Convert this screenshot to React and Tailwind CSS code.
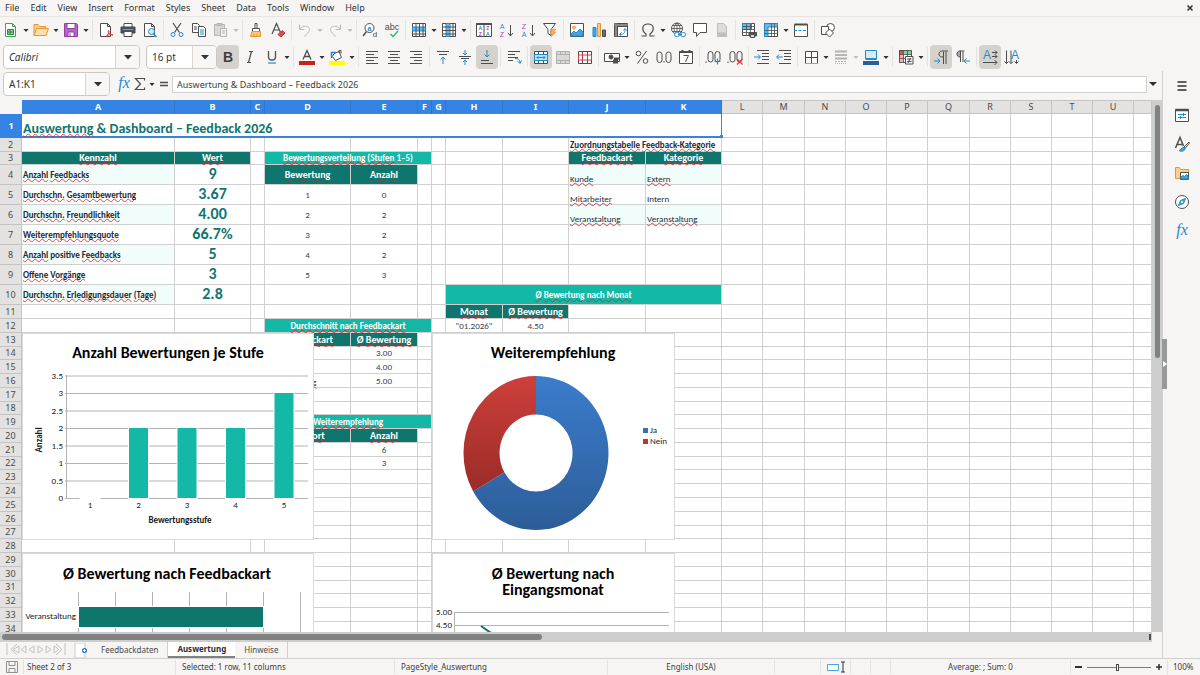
import { useState } from "react";

const SHEET_FONT = "font-[Carlito,Lato,sans-serif]";

/* ---------- icons, all drawn on a 16 x 16 grid ---------- */

function Icon({ children }) {
  return (
    <svg viewBox="0 0 16 16" className="size-4 shrink-0 overflow-visible" fill="none" stroke="#4d4d4d" strokeWidth="1" aria-hidden="true">
      {children}
    </svg>
  );
}

function Glyph({ x = 8, y = 12, size = 12, fill = "#4d4d4d", weight = 400, children }) {
  return (
    <text x={x} y={y} fontSize={size} fill={fill} stroke="none" textAnchor="middle" fontWeight={weight} fontFamily="Liberation Sans, sans-serif">
      {children}
    </text>
  );
}

const BLUE = "#1e8bcd";

const icons = {
  new: (
    <Icon>
      <path d="M2.5 1.5h7l3 3v10h-10z" fill="#fff" stroke="#3aa655" />
      <path d="M9.500 1.500v3h3" stroke="#3aa655" />
      <path d="M4.500 7.500h6v5h-6zM4.500 10h6M7 7.500v5" fill="#8fd19e" stroke="#2b8a43" />
    </Icon>
  ),
  open: (
    <Icon>
      <path d="M1 13.500v-11h4l1.500 2h6v2" fill="#fbd08a" stroke="#e8953a" />
      <path d="M1 13.500l2.500-7h12l-2.500 7z" fill="#fde0ad" stroke="#e8953a" />
    </Icon>
  ),
  save: (
    <Icon>
      <path d="M1.500 1.500h12l1 1v12h-13z" fill="#b667c4" stroke="#8e3fa0" />
      <path d="M4 1.500h8v5H4zM5 10h6v4.500H5z" fill="#fff" stroke="#8e3fa0" />
      <path d="M7 11v3" stroke="#8e3fa0" />
    </Icon>
  ),
  pdf: (
    <Icon>
      <path d="M2.500 1.500h7l3 3v10h-10z" fill="#fff" />
      <path d="M9.500 1.500v3h3" />
      <path d="M8 14.500c3-2 3.500-6 2.500-6s0 4 4.500 4.500c-3-1-5 0-7 1.500z" stroke="#e0383e" />
    </Icon>
  ),
  print: (
    <Icon>
      <path d="M4 5.500v-4h8v4" fill="#fff" />
      <path d="M1 5h14v6H1z" fill="#4d5560" stroke="#3d444d" />
      <path d="M4 9.500h8v5H4z" fill="#fff" />
      <path d="M3 7.500h10" stroke="#4aa3df" />
    </Icon>
  ),
  preview: (
    <Icon>
      <path d="M2.500 1.500h7l3 3v10h-10z" fill="#fff" />
      <path d="M9.500 1.500v3h3" />
      <circle cx="9.500" cy="9.500" r="3" fill="#d6ecfa" stroke={BLUE} />
      <path d="M11.500 12l3 3" stroke={BLUE} strokeWidth="1.400" />
    </Icon>
  ),
  cut: (
    <Icon>
      <path d="M4 1l6.500 9.500M12 1L5.500 10.500" strokeWidth="1.200" />
      <circle cx="4" cy="12.500" r="2" stroke={BLUE} />
      <circle cx="12" cy="12.500" r="2" stroke={BLUE} />
    </Icon>
  ),
  copy: (
    <Icon>
      <path d="M1.500 1.500h5l2 2v7h-7zM3 5h3M3 7h3" fill="#fff" />
      <path d="M7.500 4.500h5l2 2v8h-7z" fill="#fff" />
      <path d="M9 8h4M9 10h4M9 12h4" stroke={BLUE} />
    </Icon>
  ),
  paste: (
    <Icon>
      <path d="M1.500 2.500h10v11h-10z" fill="#d9d8d6" stroke="#b5b4b1" />
      <path d="M4 1.500h5v2H4z" fill="#c7c6c3" stroke="#b5b4b1" />
      <path d="M7.500 6.500h6v8h-6zM9 9h3M9 11h3" fill="#f2f1f0" stroke="#b5b4b1" />
    </Icon>
  ),
  clone: (
    <Icon>
      <path d="M7 1.500h2v5H7z" fill="#fff" />
      <path d="M4.500 6.500h7v3h-7z" fill="#fff" />
      <path d="M4 9.500h8.500v5h-10z" fill="#fbc77a" stroke="#e8953a" />
      <path d="M6 14v-2M9 14v-2" stroke="#e8953a" />
    </Icon>
  ),
  clear: (
    <Icon>
      <path d="M2 12L6.500 1.500l4 9M3.500 8h6" strokeWidth="1.200" />
      <path d="M8 12.500l4-4 3 2.500-4 4z" fill="#e5484d" stroke="#c8363c" />
    </Icon>
  ),
  undo: (
    <Icon>
      <path d="M2.500 2.500v5h5M2.500 7.500c3-5 10-4 10 0 0 3-3 4-5 7" stroke="#bdbcb9" />
    </Icon>
  ),
  redo: (
    <Icon>
      <path d="M13.500 2.500v5h-5M13.500 7.500c-3-5-10-4-10 0 0 3 3 4 5 7" stroke="#bdbcb9" />
    </Icon>
  ),
  find: (
    <Icon>
      <circle cx="7.500" cy="6" r="4.500" fill="#fff" />
      <path d="M4.500 9.500L1 14" strokeWidth="1.400" />
      <Glyph x={7.500} y={8.500} size={7} fill={BLUE} weight={700}>a</Glyph>
      <Glyph x={13} y={15} size={8}>d</Glyph>
    </Icon>
  ),
  spell: (
    <Icon>
      <Glyph x={8} y={8} size={9}>abc</Glyph>
      <path d="M6.500 12l2.500 2.500 5-5.500" stroke="#2fb36d" strokeWidth="1.300" />
    </Icon>
  ),
  row: (
    <Icon>
      <path d="M1.500 1.500h13v13h-13z" fill="#fff" />
      <path d="M1.500 5h13v4h-13z" fill="#6db8ea" stroke={BLUE} />
      <path d="M1.500 12h13M5 1.500v13M8.500 1.500v13M12 1.500v13" />
    </Icon>
  ),
  column: (
    <Icon>
      <path d="M1.500 1.500h13v13h-13z" fill="#fff" />
      <path d="M5 1.500h4v13H5z" fill="#6db8ea" stroke={BLUE} />
      <path d="M12 1.500v13M1.500 5h13M1.500 8.500h13M1.500 12h13" />
    </Icon>
  ),
  sort: (
    <Icon>
      <path d="M.5 1.500h15v13H.5zM8 3v11.500" fill="#fff" />
      <path d="M.5 2h15" strokeWidth="2" />
      <Glyph x={4.300} y={8} size={5} fill={BLUE} weight={700}>A</Glyph>
      <Glyph x={4.300} y={14} size={5} fill="#b23fc4" weight={700}>Z</Glyph>
      <Glyph x={11.700} y={8} size={5} fill="#b23fc4" weight={700}>Z</Glyph>
      <Glyph x={11.700} y={14} size={5} fill={BLUE} weight={700}>A</Glyph>
    </Icon>
  ),
  asc: (
    <Icon>
      <Glyph x={4} y={6.500} size={7} fill={BLUE}>A</Glyph>
      <Glyph x={4} y={15} size={7} fill="#b23fc4">Z</Glyph>
      <path d="M12.500 3v11M10 11l2.500 3 2.500-3" />
    </Icon>
  ),
  desc: (
    <Icon>
      <Glyph x={4} y={6.500} size={7} fill="#b23fc4">Z</Glyph>
      <Glyph x={4} y={15} size={7} fill={BLUE}>A</Glyph>
      <path d="M12.500 3v11M10 11l2.500 3 2.500-3" />
    </Icon>
  ),
  filter: (
    <Icon>
      <path d="M1.500 1.500h12l-4.500 6v6l-3-2v-4z" fill="#fff" />
      <path d="M11 7l-3 4.500h2.500L9 15l5-5h-2.500L14 7z" fill="#fbb04c" stroke="#e8953a" strokeWidth=".6" />
    </Icon>
  ),
  image: (
    <Icon>
      <path d="M1.500 1.500h13v13h-13z" fill="#fff" />
      <circle cx="5" cy="5.500" r="1.500" fill="#fbc77a" stroke="#e8953a" />
      <path d="M2 14v-2l3-3 2 2 4-4 3 3v4z" fill="#4aa3df" stroke={BLUE} />
    </Icon>
  ),
  chart: (
    <Icon>
      <path d="M2 5.500h3v9H2z" fill="#4aa3df" stroke={BLUE} />
      <path d="M6.500 1.500h3v13h-3z" fill="#fbc77a" stroke="#e8953a" />
      <path d="M11.500 8h3v6.500h-3z" fill="#6d6d6d" />
    </Icon>
  ),
  pivot: (
    <Icon>
      <path d="M1.500 1.500h13v13h-13zM1.500 4.500h13M4.500 1.500v13" fill="#fff" />
      <path d="M1.500 3h13M3 1.500v13" stroke="#8a8a8a" strokeWidth="2" />
      <path d="M7 12.500c4 0 5-2 5-5M10.500 8.500l1.500-2 1.500 2M8.500 10.500l-2 2 2 1.500" stroke={BLUE} />
    </Icon>
  ),
  omega: (
    <Icon>
      <path d="M1.500 14h4.500v-2C1 8.500 2 2 8 2s7 6.500 2 10v2h4.500" strokeWidth="1.200" />
    </Icon>
  ),
  link: (
    <Icon>
      <circle cx="7" cy="6.500" r="5.500" fill="#fff" />
      <path d="M7 1v11M1.500 6.500h11M2.500 3.500h9M2.500 9.500h9M7 1c-4 3-4 8 0 11M7 1c4 3 4 8 0 11" strokeWidth=".8" />
      <rect x="4.500" y="10.500" width="5" height="4" rx="2" fill="#fff" stroke={BLUE} />
      <rect x="10.500" y="10.500" width="5" height="4" rx="2" fill="#fff" stroke={BLUE} />
      <path d="M8 12.500h4" stroke={BLUE} />
    </Icon>
  ),
  comment: (
    <Icon>
      <path d="M1.500 1.500h13v9H8l-3.500 4v-4h-3z" fill="#fff" />
    </Icon>
  ),
  headers: (
    <Icon>
      <path d="M3.500 1.500h6l3 3v10h-9z" fill="#dddcda" stroke="#c0bfbc" />
      <path d="M3.500 11h9v3.500h-9z" fill="#c0bfbc" stroke="#c0bfbc" />
    </Icon>
  ),
  printArea: (
    <Icon>
      <path d="M1.500 1.500h12v12h-12z" fill="#fff" />
      <path d="M1.500 1.500h9v6h-9z" fill="#6db8ea" stroke={BLUE} />
      <path d="M1.500 4.500h12M1.500 7.500h12M1.500 10.500h12M5.500 1.500v12M9.500 1.500v12" strokeWidth=".8" />
      <path d="M8 10.500h7.500v3.500H8z" fill="#4d5560" />
      <path d="M9.500 12.500h4v3h-4z" fill="#bfe0f5" />
    </Icon>
  ),
  freeze: (
    <Icon>
      <path d="M1.500 1.500h13v13h-13z" fill="#fff" />
      <path d="M1.500 1.500h13v3.500H5v9.500H1.500z" fill="#6db8ea" stroke={BLUE} />
      <path d="M1.500 8.500h13M1.500 11.500h13M8.500 1.500v13M11.500 1.500v13" strokeWidth=".8" />
    </Icon>
  ),
  split: (
    <Icon>
      <path d="M1.500 2.500h13v12h-13z" fill="#fff" />
      <path d="M1.500 2.500h13" strokeWidth="2" />
      <path d="M1 8.500h14" stroke={BLUE} strokeDasharray="3 1.500" />
    </Icon>
  ),
  shapes: (
    <Icon>
      <circle cx="10.500" cy="5.500" r="4" fill="#fff" />
      <path d="M1.500 4.500h7v8h-7z" fill="#fff" />
      <path d="M9.500 7l4 4-4 4-4-4z" fill="#fff" />
    </Icon>
  ),
  bold: (
    <Icon>
      <Glyph y={13} size={14} weight={700} fill="#3d3d3d">B</Glyph>
    </Icon>
  ),
  italic: (
    <Icon>
      <path d="M7 2.500h4M5 13.500h4M9.500 2.500l-3 11" strokeWidth="1.200" />
    </Icon>
  ),
  underline: (
    <Icon>
      <path d="M4.500 2v6c0 4 7 4 7 0V2" strokeWidth="1.300" />
      <path d="M4 14h8" stroke={BLUE} strokeWidth="1.200" />
    </Icon>
  ),
  fontColor: (
    <Icon>
      <path d="M4 10.500L8 1.500l4 9M5.500 7.500h5" strokeWidth="1.300" />
      <path d="M0 14h16" stroke="#c9211e" strokeWidth="4" />
    </Icon>
  ),
  highlight: (
    <Icon>
      <path d="M5 4.500l5-2 2.500 6-6 3-3-4z" fill="#fff" />
      <path d="M10 4V1.500h2v3" />
      <path d="M2.500 9V3.500H7" stroke={BLUE} strokeWidth="1.500" />
      <path d="M0 14h16" stroke="#ffff00" strokeWidth="4" />
    </Icon>
  ),
  left: (
    <Icon>
      <path d="M2 2.500h12M2 5.500h8M2 8.500h12M2 11.500h8M2 14.500h12" />
    </Icon>
  ),
  center: (
    <Icon>
      <path d="M2 2.500h12M4 5.500h8M2 8.500h12M4 11.500h8M2 14.500h12" />
    </Icon>
  ),
  right: (
    <Icon>
      <path d="M2 2.500h12M6 5.500h8M2 8.500h12M6 11.500h8M2 14.500h12" />
    </Icon>
  ),
  top: (
    <Icon>
      <path d="M2 2.500h12M4 5.500h8" />
      <path d="M8 15V8M5.500 10.500L8 8l2.500 2.500" stroke={BLUE} />
    </Icon>
  ),
  middle: (
    <Icon>
      <path d="M2 7.500h12M4 9.500h8" />
      <path d="M8 1v5M6 4l2 2 2-2M8 16v-5M6 13l2-2 2 2" stroke={BLUE} />
    </Icon>
  ),
  bottom: (
    <Icon>
      <path d="M2 11.500h8M2 14.500h12" />
      <path d="M8 1v7M5.500 5.500L8 8l2.500-2.500" stroke={BLUE} />
    </Icon>
  ),
  wrap: (
    <Icon>
      <path d="M2 2.500h12M2 5.500h7M2 8.500h10M2 11.500h5" />
      <path d="M9 9.500c3 0 5 1 5 4.500M11.500 12l2.500 2.500 1.500-3" stroke={BLUE} />
    </Icon>
  ),
  merge: (
    <Icon>
      <path d="M1.500 2.500h13v12h-13zM1.500 5.500h13M1.500 11.500h13M5.500 2.500v3M10.500 2.500v3M5.500 11.500v3M10.500 11.500v3" fill="#fff" />
      <path d="M1.500 5.500h13v6h-13zM4 8.500h8M5.500 7L4 8.500 5.500 10M10.500 7L12 8.500 10.500 10" fill="#bfe0f5" stroke={BLUE} />
    </Icon>
  ),
  mergeCells: (
    <Icon>
      <path d="M1.500 2.500h13v12h-13zM1.500 5.500h13M1.500 11.500h13M5.500 2.500v3M10.500 2.500v3M5.500 11.500v3M10.500 11.500v3" fill="#d9d8d6" stroke="#b0afac" />
    </Icon>
  ),
  unmerge: (
    <Icon>
      <path d="M1.500 2.500h13v12h-13zM5.500 2.500v12M10.500 2.500v12" fill="#fff" />
      <path d="M1.500 6h13v5h-13zM5.500 6v5M10.500 6v5" stroke="#e0383e" fill="#fff" />
    </Icon>
  ),
  currency: (
    <Icon>
      <path d="M.5 4.500h15v8H.5z" fill="#fff" />
      <circle cx="7" cy="8" r="2" fill="#4d4d4d" />
      <path d="M9 11.500h5M9 13.500h5M10 9.500h5" strokeWidth="2" />
    </Icon>
  ),
  percent: (
    <Icon>
      <path d="M12.500 2l-9 12.500" />
      <circle cx="4.500" cy="4.500" r="2.300" />
      <circle cx="11.500" cy="12" r="2.300" />
    </Icon>
  ),
  number: (
    <Icon>
      <rect x="1" y="3" width="5" height="10.500" rx="2.500" />
      <rect x="10" y="3" width="5" height="10.500" rx="2.500" />
      <path d="M8 13.500v-1.500" />
    </Icon>
  ),
  date: (
    <Icon>
      <path d="M1.500 2.500h13v12h-13z" fill="#fff" />
      <path d="M1.500 3h13M4.500 1v3M11.500 1v3" strokeWidth="2" />
      <path d="M5.500 6.500h5l-3 6.500" />
    </Icon>
  ),
  addDecimal: (
    <Icon>
      <path d="M1 12.500v1.500" />
      <rect x="3" y="2.500" width="5" height="10.500" rx="2.500" />
      <rect x="10" y="2.500" width="5" height="10.500" rx="2.500" />
      <path d="M12.500 9.500v6M9.500 12.500h6" stroke={BLUE} strokeWidth="1.200" />
    </Icon>
  ),
  delDecimal: (
    <Icon>
      <path d="M1 12.500v1.500" />
      <rect x="3" y="2.500" width="5" height="10.500" rx="2.500" />
      <rect x="10" y="2.500" width="5" height="10.500" rx="2.500" />
      <path d="M10 10l5.500 5.500M15.500 10L10 15.500" stroke="#e0383e" strokeWidth="1.200" />
    </Icon>
  ),
  indent: (
    <Icon>
      <path d="M3 1.500h12M8 4.500h7M8 7.500h7M8 10.500h7M3 14.500h12" />
      <path d="M0 8h6M4 5.500L6.500 8 4 10.500" stroke={BLUE} />
    </Icon>
  ),
  outdent: (
    <Icon>
      <path d="M3 1.500h12M8 4.500h7M8 7.500h7M8 10.500h7M3 14.500h12" />
      <path d="M7 8H1M3 5.500L.5 8 3 10.500" stroke={BLUE} />
    </Icon>
  ),
  borders: (
    <Icon>
      <path d="M2.500 2.500h12v12h-12zM8.500 2.500v12M2.500 8.500h12" fill="#fff" />
      <path d="M2 14.500h13" stroke="#e8953a" />
    </Icon>
  ),
  borderStyle: (
    <Icon>
      <path d="M2 2.500h12M2 6h12M2 9.500h12" stroke="#b5b4b1" strokeWidth="1.800" />
      <path d="M2 12.500h12" stroke="#b5b4b1" strokeDasharray="2 1" />
      <path d="M2 14.500h12" stroke="#b5b4b1" strokeDasharray="1 1" />
    </Icon>
  ),
  borderColor: (
    <Icon>
      <path d="M2.500 1.500h11v8h-11z" fill="#dbe9f4" stroke={BLUE} />
      <path d="M2.500 10h11" strokeWidth="2" stroke={BLUE} />
      <path d="M0 14h16" stroke="#2a6099" strokeWidth="4" />
    </Icon>
  ),
  conditional: (
    <Icon>
      <path d="M1.500 1.500h12v12h-12z" fill="#fff" />
      <path d="M1.500 5.500h4v8h-4z" fill="#f3b0b2" stroke="none" />
      <path d="M1.500 1.500h4v4h-4z" fill="#e5484d" stroke="none" />
      <path d="M5.500 1.500h8v4h-8z" fill="#7ed39a" stroke="none" />
      <path d="M1.500 1.500h12v12h-12zM1.500 5.500h12M1.500 9.500h12M5.500 1.500v12M9.500 1.500v12" strokeWidth=".8" />
      <path d="M7.500 7.500h7.500v7.500h-7.500zM9 10h4.500M9 12.500h4.500M12.500 9l-2.500 5" fill="#fff" />
    </Icon>
  ),
  ltr: (
    <Icon>
      <path d="M10.500 15V2.500M13 15V2.500M15 2H9c-4 0-4 6 0 6h1.500" />
      <path d="M1 12h5.500M4.500 9.500L7 12l-2.500 2.500" stroke={BLUE} />
    </Icon>
  ),
  rtl: (
    <Icon>
      <path d="M5.500 2v6H5C1 8 1 2 5 2z" fill="#a9a9a9" />
      <path d="M5.500 13V2.500M8 13V2.500M9.500 2H5" />
      <path d="M15 12H9.500M11.500 9.500L9 12l2.500 2.500" stroke={BLUE} />
    </Icon>
  ),
  dirLtr: (
    <Icon>
      <Glyph x={5} y={10} size={12} fill={BLUE}>A</Glyph>
      <path d="M10 3.500h5M10 7.500h5M1 13.500h14M13 1.500l2 2-2 2M13 5.500l2 2-2 2M12.500 11l2.500 2.500-2.500 2.500" />
    </Icon>
  ),
  dirTtb: (
    <Icon>
      <Glyph x={11} y={10} size={12} fill={BLUE}>A</Glyph>
      <path d="M2.500 1.500v13M7 1.500v13M12.500 11v3.500M.5 12.500l2 2 2-2M5 12.500l2 2 2-2M10.500 12.500l2 2 2-2" />
    </Icon>
  ),
  fx: (
    <Icon>
      <text x="8" y="12" fontSize="16" fill={BLUE} stroke="none" textAnchor="middle" fontStyle="italic" fontFamily="Liberation Serif, serif">fx</text>
    </Icon>
  ),
  sigma: (
    <Icon>
      <path d="M12.500 4.500v-2h-9l5 5.500-5 5.500h9v-2" strokeWidth="1.200" />
    </Icon>
  ),
  equals: (
    <Icon>
      <path d="M4 6.500h8M4 9.500h8" strokeWidth="1.600" />
    </Icon>
  ),
  menu: (
    <Icon>
      <path d="M3.500 4h9M3.500 8h9M3.500 12h9" stroke="#2e2e2e" strokeWidth="1.300" />
    </Icon>
  ),
  properties: (
    <Icon>
      <path d="M1.500 2.500h13v12h-13z" fill="#fff" />
      <path d="M1.500 3h13" strokeWidth="2.500" />
      <path d="M4 7.500h8M4 10.500h8M9.500 6v3M6.500 9v3" stroke={BLUE} />
    </Icon>
  ),
  styles: (
    <Icon>
      <path d="M1.500 12L6 1.500 9.500 10M3 8.500h6" strokeWidth="1.500" />
      <path d="M15 6l-5 5 1 1.500L15.500 7z" fill="#fff" />
      <path d="M5 14.500c2 0 2-3.500 5-3l1 1.500c0 2-4 3-6 1.500z" fill="#4aa3df" stroke={BLUE} />
    </Icon>
  ),
  gallery: (
    <Icon>
      <path d="M1.500 13.500v-11h4l1 2h8v9z" fill="#fbd08a" stroke="#e8953a" />
      <path d="M6.500 7.500h8v7h-8z" fill="#fff" />
      <path d="M7 14v-2l2-1.500 1.500 1 2-2 1.500 1.500v3z" fill="#4aa3df" stroke={BLUE} />
    </Icon>
  ),
  navigator: (
    <Icon>
      <circle cx="8" cy="8" r="6.500" fill="#fff" />
      <path d="M11.500 4.500L9.500 9.500 4.500 11.500 6.500 6.500z" fill="#4aa3df" stroke={BLUE} />
      <circle cx="8" cy="8" r="1" fill="#fff" stroke="none" />
    </Icon>
  ),
};

function Caret({ disabled }) {
  return (
    <svg viewBox="0 0 8 8" className="size-2" fill={disabled ? "#bdbcb9" : "#2e2e2e"} aria-hidden="true">
      <path d="M1.500 3h5L4 6z" />
    </svg>
  );
}

/* ---------- toolbars ---------- */

// [icon, label, options]; "|" is a separator
const standardBar = [
  ["new", "New", { menu: true }], ["open", "Open", { menu: true }], ["save", "Save", { menu: true }], "|",
  ["pdf", "Export as PDF"], ["print", "Print"], ["preview", "Print preview"], "|",
  ["cut", "Cut"], ["copy", "Copy"], ["paste", "Paste", { menu: true, disabled: true }], "|",
  ["clone", "Clone formatting"], ["clear", "Clear formatting"], "|",
  ["undo", "Undo", { menu: true, disabled: true }], ["redo", "Redo", { menu: true, disabled: true }], "|",
  ["find", "Find and replace"], ["spell", "Spelling"], "|",
  ["row", "Row", { menu: true }], ["column", "Column", { menu: true }], "|",
  ["sort", "Sort"], ["asc", "Sort ascending"], ["desc", "Sort descending"], ["filter", "AutoFilter"], "|",
  ["image", "Insert image"], ["chart", "Insert chart"], ["pivot", "Insert pivot table"], "|",
  ["omega", "Special character", { menu: true }], ["link", "Insert hyperlink"], ["comment", "Insert comment"],
  ["headers", "Headers and footers", { disabled: true }], "|",
  ["printArea", "Define print area"], ["freeze", "Freeze rows and columns", { menu: true }], ["split", "Split window"], "|",
  ["shapes", "Draw functions"],
];

const formatBar = [
  ["bold", "Bold", { pressed: true }], ["italic", "Italic"], ["underline", "Underline", { menu: true }], "|",
  ["fontColor", "Font color", { menu: true }], ["highlight", "Background color", { menu: true }], "|",
  ["left", "Align left"], ["center", "Center horizontally"], ["right", "Align right"], "|",
  ["top", "Align top"], ["middle", "Center vertically"], ["bottom", "Align bottom", { pressed: true }], "|",
  ["wrap", "Wrap text"], "|",
  ["merge", "Merge and center", { pressed: true }], ["mergeCells", "Merge cells", { disabled: true }], ["unmerge", "Unmerge cells"], "|",
  ["currency", "Format as currency", { menu: true }], ["percent", "Format as percent"], ["number", "Format as number"], ["date", "Format as date"], "|",
  ["addDecimal", "Add decimal place"], ["delDecimal", "Delete decimal place"], "|",
  ["indent", "Increase indent"], ["outdent", "Decrease indent"], "|",
  ["borders", "Borders", { menu: true }], ["borderStyle", "Border style", { menu: true, disabled: true }], ["borderColor", "Border color", { menu: true }], "|",
  ["conditional", "Conditional formatting", { menu: true }], "|",
  ["ltr", "Left-to-right", { pressed: true }], ["rtl", "Right-to-left"], "|",
  ["dirLtr", "Text direction left to right", { pressed: true }], ["dirTtb", "Text direction top to bottom"],
];

function ToolItems({ items }) {
  return items.map((item, i) => {
    if (item === "|") {
      return <div key={i} className="flex w-[5px] shrink-0 justify-center"><span className="h-5 w-px bg-[#e3e2e0]" /></div>;
    }
    const [name, label, { menu, pressed, disabled } = {}] = item;
    return (
      <div key={i} className="flex shrink-0 items-center">
        <button
          type="button"
          aria-label={label}
          aria-pressed={pressed}
          disabled={disabled}
          className={pressed ? "flex h-6 w-[22px] items-center justify-center rounded-sm bg-[#d5d2ce]" : "flex h-6 w-[22px] items-center justify-center rounded-sm"}
        >
          {icons[name]}
        </button>
        {menu && (
          <button type="button" aria-label={`${label} options`} disabled={disabled}>
            <Caret disabled={disabled} />
          </button>
        )}
      </div>
    );
  });
}

function ComboBox({ label, value, className, inputClassName }) {
  return (
    <div className={`flex h-6 shrink-0 overflow-hidden rounded border border-[#cdc7c2] bg-white ${className}`}>
      <input aria-label={label} defaultValue={value} className={`min-w-0 flex-1 pl-[5px] text-[10px] text-[#2e3436] outline-none ${inputClassName}`} />
      <button type="button" aria-label={`${label} list`} className="flex w-6 items-center justify-center border-l border-[#d9d4d0] bg-[#f8f7f6]">
        <svg viewBox="0 0 8 8" className="size-2" fill="#2e3436" aria-hidden="true"><path d="M0 2h8L4 6.500z" /></svg>
      </button>
    </div>
  );
}

/* ---------- sheet ---------- */

const columns = [
  ["A", "w-[153px]"], ["B", "w-[76px]"], ["C", "w-[14px]"], ["D", "w-[86px]"], ["E", "w-[67px]"], ["F", "w-[14px]"],
  ["G", "w-[14px]"], ["H", "w-[57px]"], ["I", "w-[66px]"], ["J", "w-[77px]"], ["K", "w-[76px]"], ["L", "w-[41px]"],
  ["M", "w-[42px]"], ["N", "w-[41px]"], ["O", "w-[41px]"], ["P", "w-[41px]"], ["Q", "w-[42px]"], ["R", "w-[41px]"],
  ["S", "w-[41px]"], ["T", "w-[41px]"], ["U", "w-[41px]"], ["", ""],
];

const T = "h-5";
const N = "h-3.5";
const S = "h-[13px]";
const rowHeights = [
  "h-6", N, S, T, T, T, T, T, T, T, N, N, N, S, N, N, N, S, N, N, N, S, N, N, N, N, S, N, N, N, S, N, N, N,
];

const HEAD = "bg-[#0f766e] text-white font-bold text-center text-[10px]";
const BAND = "bg-[#14b8a6] text-white font-bold text-center text-[9px]";
const LABEL = "text-left font-bold text-[9px] text-[#1f2937]";
const LABEL_ALT = `${LABEL} bg-[#f0fdfa]`;
const KPI = "text-center font-bold text-[16px] leading-[18px] text-[#0f766e] align-top";
const NUM = "text-center text-[9px] text-[#374151]";
const TXT = "text-left align-bottom text-[9px] leading-[10px] text-[#1f2937]";
const TXT_ALT = `${TXT} bg-[#f0fdfa]`;

const cells = {
  A3: ["Kennzahl", HEAD], B3: ["Wert", HEAD],
  A4: ["Anzahl Feedbacks", LABEL_ALT], B4: ["9", KPI],
  A5: ["Durchschn. Gesamtbewertung", LABEL], B5: ["3.67", KPI],
  A6: ["Durchschn. Freundlichkeit", LABEL_ALT], B6: ["4.00", KPI],
  A7: ["Weiterempfehlungsquote", LABEL], B7: ["66.7%", KPI],
  A8: ["Anzahl positive Feedbacks", LABEL_ALT], B8: ["5", KPI],
  A9: ["Offene Vorgänge", LABEL], B9: ["3", KPI],
  A10: ["Durchschn. Erledigungsdauer (Tage)", LABEL_ALT], B10: ["2.8", KPI],
  D3: ["Bewertungsverteilung (Stufen 1–5)", BAND, 3],
  D4: ["Bewertung", HEAD], E4: ["Anzahl", HEAD],
  D5: ["1", NUM], E5: ["0", NUM], D6: ["2", NUM], E6: ["2", NUM], D7: ["3", NUM], E7: ["2", NUM],
  D8: ["4", NUM], E8: ["2", NUM], D9: ["5", NUM], E9: ["3", NUM],
  J2: ["Zuordnungstabelle Feedback-Kategorie", LABEL, 2],
  J3: ["Feedbackart", HEAD], K3: ["Kategorie", HEAD],
  J4: ["Kunde", TXT_ALT], K4: ["Extern", TXT_ALT],
  J5: ["Mitarbeiter", TXT], K5: ["Intern", TXT],
  J6: ["Veranstaltung", TXT_ALT], K6: ["Veranstaltung", TXT_ALT],
  H10: ["Ø Bewertung nach Monat", BAND, 4],
  H11: ["Monat", HEAD], I11: ["Ø Bewertung", HEAD],
  H12: ['"01.2026"', NUM], I12: ["4.50", NUM],
  D12: ["Durchschnitt nach Feedbackart", BAND, 3],
  D13: ["Feedbackart", HEAD], E13: ["Ø Bewertung", HEAD],
  D14: ["Kunde", TXT], E14: ["3.00", NUM],
  D15: ["Mitarbeiter", TXT], E15: ["4.00", NUM],
  D16: ["Veranstaltung", TXT], E16: ["5.00", NUM],
  D19: ["Weiterempfehlung", BAND, 3],
  D20: ["Antwort", HEAD], E20: ["Anzahl", HEAD],
  D21: ["Ja", TXT], E21: ["6", NUM],
  D22: ["Nein", TXT], E22: ["3", NUM],
};

const dictionary = new Set(["Dashboard", "Feedback", "positive", "Intern"]);

// underlines the words that the English dictionary does not know
function Spelled({ text }) {
  return text.split(" ").map((word, i) => {
    const unknown = /[A-Za-zØ]/.test(word) && !dictionary.has(word);
    return (
      <span key={i}>
        {i > 0 && " "}
        <span className={unknown ? "underline decoration-[#e01b24]/80 decoration-wavy decoration-1 underline-offset-0 [text-decoration-skip-ink:none]" : ""}>{word}</span>
      </span>
    );
  });
}

function RowHeader({ number }) {
  return (
    <th scope="row" className="border-r border-b border-[#c4c4c4] bg-[#e3e2e1] p-0 text-center font-['Noto_Sans'] text-[9px] font-normal text-[#4a4a4a]">
      {number}
    </th>
  );
}

function SheetRow({ number, height }) {
  const tds = [];
  let skip = 0;
  columns.forEach(([letter], i) => {
    if (skip > 0) {
      skip -= 1;
      return;
    }
    const [text, style, span = 1] = cells[`${letter}${number}`] ?? ["", ""];
    skip = span - 1;
    tds.push(
      <td key={i} colSpan={span} className={`whitespace-nowrap border-r border-b border-[#d0d0d0] px-px py-0 ${style}`}>
        {text && <Spelled text={text} />}
      </td>
    );
  });
  return (
    <tr className={height}>
      <RowHeader number={number} />
      {tds}
    </tr>
  );
}

function SheetTable() {
  return (
    <table className={`w-full table-fixed border-separate border-spacing-0 leading-[12px] ${SHEET_FONT}`}>
      <colgroup>
        <col className="w-[22px]" />
        {columns.map(([letter, width]) => <col key={letter} className={width} />)}
      </colgroup>
      <thead>
        <tr className="h-3.5 font-['Noto_Sans'] text-[9px]">
          <td className="bg-[#f6f5f4] p-0" />
          {columns.map(([letter], i) => (
            <th
              key={letter}
              scope="col"
              className={i < 11 ? "border-r border-[#2f76cc] bg-[#3584e4] p-0 font-bold text-white" : "border-t border-r border-b border-[#c4c4c4] bg-[#e3e2e1] p-0 font-normal text-[#4a4a4a]"}
            >
              {letter}
            </th>
          ))}
        </tr>
      </thead>
      <tbody>
        <tr className="h-6">
          <th scope="row" className="bg-[#3584e4] p-0 text-center font-['Noto_Sans'] text-[9px] font-bold text-white">1</th>
          <td colSpan={11} className="relative border-r border-b-2 border-[#3d82d8] px-px py-0 align-bottom text-[14px] leading-[15px] font-bold whitespace-nowrap text-[#0f766e]">
            <Spelled text="Auswertung & Dashboard – Feedback 2026" />
            <span className="absolute -right-0.5 -bottom-0.5 size-[3px] bg-[#3584e4]" />
          </td>
          {columns.slice(11).map(([letter]) => <td key={letter} className="border-r border-b border-[#d0d0d0] p-0" />)}
        </tr>
        {rowHeights.slice(1).map((height, i) => <SheetRow key={i} number={i + 2} height={height} />)}
      </tbody>
    </table>
  );
}

/* ---------- charts lying on the sheet ---------- */

function ChartFrame({ place, width, label, children }) {
  return (
    <svg
      role="img"
      aria-label={label}
      width={width}
      height="207"
      viewBox={`0 0 ${width} 207`}
      className={`absolute bg-white outline -outline-offset-1 outline-[#d9d9d9] ${place}`}
      fontFamily="Carlito, Lato, sans-serif"
      fontSize="9"
      fill="#1a1a1a"
    >
      {children}
    </svg>
  );
}

function ChartTitle({ x, y = 25, children }) {
  return <text x={x} y={y} fontSize="16" fontWeight="700" fill="#000" textAnchor="middle">{children}</text>;
}

function RatingChart() {
  const values = [0, 2, 2, 2, 3];
  const y = (v) => 165 - v * 35;
  return (
    <ChartFrame place="left-[22px] top-[233px]" width={292} label="Anzahl Bewertungen je Stufe">
      <ChartTitle x={146}>Anzahl Bewertungen je Stufe</ChartTitle>
      {[0, 0.5, 1, 1.5, 2, 2.5, 3, 3.5].map((v) => (
        <g key={v}>
          <path d={`M43 ${y(v) + 0.5}H286`} stroke="#b3b3b3" />
          <text x="41" y={y(v) + 3} textAnchor="end">{v}</text>
        </g>
      ))}
      <path d="M44.500 42v124" stroke="#b3b3b3" />
      {values.map((v, i) => (
        <g key={i}>
          <rect x={57.500 + i * 48.500} y={y(v) - 1} width="21" height={v * 35 + 3} fill="#fff" />
          <rect x={58.500 + i * 48.500} y={y(v)} width="19" height={v * 35} fill="#14b8a6" />
          <text x={68 + i * 48.500} y="175" textAnchor="middle">{i + 1}</text>
        </g>
      ))}
      <text x="158" y="190" fontWeight="700" textAnchor="middle">Bewertungsstufe</text>
      <text transform="translate(20 107) rotate(-90)" fontWeight="700" textAnchor="middle">Anzahl</text>
    </ChartFrame>
  );
}

function RecommendationChart() {
  return (
    <ChartFrame place="left-[432px] top-[233px]" width={243} label="Weiterempfehlung">
      <defs>
        <linearGradient id="ja" x1="0" y1="0" x2="0" y2="1">
          <stop offset="0" stopColor="#3b7ccb" />
          <stop offset="1" stopColor="#2d5d98" />
        </linearGradient>
        <linearGradient id="nein" x1="0" y1="0" x2="0" y2="1">
          <stop offset="0" stopColor="#ce3f3a" />
          <stop offset="1" stopColor="#9a2c28" />
        </linearGradient>
      </defs>
      <ChartTitle x={121}>Weiterempfehlung</ChartTitle>
      <path d="M104 43A72.500 77 0 1 1 41.200 158.500L72.400 139.200A36.500 38.500 0 1 0 104 81.500Z" fill="url(#ja)" />
      <path d="M104 43A72.500 77 0 0 0 41.200 158.500L72.400 139.200A36.500 38.500 0 0 1 104 81.500Z" fill="url(#nein)" />
      <rect x="211" y="95" width="5" height="5" fill="#3670b5" />
      <text x="218" y="100">Ja</text>
      <rect x="211" y="106" width="5" height="5" fill="#b93732" />
      <text x="218" y="111">Nein</text>
    </ChartFrame>
  );
}

function FeedbackTypeChart() {
  return (
    <ChartFrame place="left-[22px] top-[453px]" width={292} label="Ø Bewertung nach Feedbackart">
      <ChartTitle x={145} y={26}>Ø Bewertung nach Feedbackart</ChartTitle>
      {[0, 1, 2, 3, 4, 5, 6].map((v) => <path key={v} d={`M${56.5 + v * 37} 39V180`} stroke="#b3b3b3" />)}
      <rect x="56" y="53" width="186" height="22" fill="#fff" />
      <rect x="57" y="54" width="184" height="20" fill="#0f766e" />
      <text x="54" y="66" textAnchor="end">Veranstaltung</text>
    </ChartFrame>
  );
}

function MonthChart() {
  return (
    <ChartFrame place="left-[432px] top-[453px]" width={243} label="Ø Bewertung nach Eingangsmonat">
      <ChartTitle x={121} y={26}>Ø Bewertung nach</ChartTitle>
      <ChartTitle x={121} y={42}>Eingangsmonat</ChartTitle>
      <path d="M22.500 59v120M22 59.500h215M22 72.500h215" stroke="#b3b3b3" />
      <text x="20" y="62" textAnchor="end">5.00</text>
      <text x="20" y="75" textAnchor="end">4.50</text>
      <path d="M49 73l60 42" stroke="#0f766e" strokeWidth="2" />
    </ChartFrame>
  );
}

/* ---------- sheet tabs and status bar ---------- */

function SheetTabs() {
  const [active, setActive] = useState("Auswertung");
  return (
    <div className="flex h-4 items-stretch pl-1.5 text-[8px] text-[#4a4a4a]">
      <svg viewBox="0 0 60 14" className="h-3.5 w-[60px]" fill="none" stroke="#c4c3c1" aria-hidden="true">
        <path d="M1 1v12M11 2L5 7.500 11 13M13 4L7 7.500 13 11zM20 4l-5 3.500 5 3.500zM28 4l-5 3.500 5 3.500zM32 4l5 3.500-5 3.500zM40 4l5 3.500-5 3.500zM48 4l5 3.500-5 3.500zM50 2l6 5.500L50 13M59 1v12" />
      </svg>
      <button type="button" aria-label="Add sheet" className="ml-2 w-4">
        <svg viewBox="0 0 16 15" className="h-[15px] w-4" aria-hidden="true">
          <path d="M1 0h10v15H1z" fill="#fff" stroke="#c9c8c6" />
          <circle cx="10.500" cy="7.500" r="2.500" fill="#2a6fc9" />
          <path d="M9 7.500h3M10.500 6v3" stroke="#fff" />
        </svg>
      </button>
      <div role="tablist" className="ml-0.5 flex">
        {["Feedbackdaten", "Auswertung", "Hinweise"].map((name) => (
          <button
            key={name}
            type="button"
            role="tab"
            aria-selected={name === active}
            onClick={() => setActive(name)}
            className={name === active ? "border-b-2 border-[#808281] bg-white px-[9px] font-bold text-[#2e2e2e]" : "border-r border-[#d0cfcd] px-[9px]"}
          >
            {name}
          </button>
        ))}
      </div>
    </div>
  );
}

function StatusBar() {
  const cell = "flex items-center border-r border-[#e3e2e0]";
  return (
    <footer className="flex h-[17px] shrink-0 border-t border-[#d3d1cf] py-px text-[8px] whitespace-nowrap text-[#3c3c3c]">
      <div className={`w-6 justify-center ${cell}`}>
        <svg viewBox="0 0 12 12" className="size-3" fill="none" stroke="#8f8f8f" aria-hidden="true">
          <path d="M.5.5h11v11H.5zM3 .5h6v4H3zM3 7.500h6v4H3z" />
        </svg>
      </div>
      <div className={`w-[152px] pl-[3px] ${cell}`}>Sheet 2 of 3</div>
      <div className={`w-[219px] pl-1.5 ${cell}`}>Selected: 1 row, 11 columns</div>
      <div className={`w-[213px] pl-1.5 ${cell}`}>PageStyle_Auswertung</div>
      <div className={`w-[167px] justify-center ${cell}`}>English (USA)</div>
      <div className={`w-[46px] ${cell}`} />
      <div className={`w-[30px] justify-center gap-0.5 ${cell}`}>
        <svg viewBox="0 0 20 12" className="h-3 w-5" fill="none" aria-hidden="true">
          <path d="M1.500 3.500h11v6h-11z" fill="#fff" stroke="#4aa3df" />
          <path d="M15 1h4M15 11h4M17 1v10" stroke="#333" />
        </svg>
      </div>
      <div className={`w-5 ${cell}`} />
      <div className={`w-5 ${cell}`} />
      <div className={`flex-1 justify-center ${cell}`}>Average: ; Sum: 0</div>
      <div className={`w-[97px] justify-between px-1 ${cell}`}>
        <button type="button" aria-label="Zoom out" className="h-0.5 w-[7px] bg-[#2e2e2e]" />
        <input
          type="range"
          aria-label="Zoom"
          min="0"
          max="100"
          defaultValue="49"
          className="h-3 w-16 appearance-none bg-transparent [&::-webkit-slider-runnable-track]:h-px [&::-webkit-slider-runnable-track]:bg-[#7a7a7a] [&::-webkit-slider-thumb]:-mt-[3px] [&::-webkit-slider-thumb]:h-[7px] [&::-webkit-slider-thumb]:w-[3px] [&::-webkit-slider-thumb]:appearance-none [&::-webkit-slider-thumb]:border [&::-webkit-slider-thumb]:border-[#4a4a4a] [&::-webkit-slider-thumb]:bg-white"
        />
        <button type="button" aria-label="Zoom in">
          <svg viewBox="0 0 8 8" className="size-2" stroke="#2e2e2e" strokeWidth="1.500" aria-hidden="true"><path d="M1 4h6M4 1v6" /></svg>
        </button>
      </div>
      <div className="flex w-8 items-center pl-[5px]">100%</div>
    </footer>
  );
}

export default function App() {
  return (
    <div className="flex h-screen flex-col overflow-hidden bg-[#f6f5f4] font-['Noto_Sans',sans-serif] leading-[12px] text-[#2e3436]">
      <header className="flex h-[17px] shrink-0 items-center justify-between border-b border-[#e6e5e3] pr-1.5 pl-[5px] text-[9px]">
        <nav aria-label="Menu bar" className="flex gap-[11px]">
          {["File", "Edit", "View", "Insert", "Format", "Styles", "Sheet", "Data", "Tools", "Window", "Help"].map((name) => (
            <button key={name} type="button">{name}</button>
          ))}
        </nav>
        <button type="button" aria-label="Close document">
          <svg viewBox="0 0 8 8" className="size-2" stroke="#2e2e2e" strokeWidth="1.500" aria-hidden="true"><path d="M1.500 1.500l5 5M6.500 1.500l-5 5" /></svg>
        </button>
      </header>

      <div role="toolbar" aria-label="Standard" className="flex h-[26px] shrink-0 items-center">
        <ToolItems items={standardBar} />
      </div>

      <div role="toolbar" aria-label="Formatting" className="flex h-7 shrink-0 items-center pl-[3px]">
        <ComboBox label="Font name" value="Calibri" className="mr-1.5 w-[137px]" inputClassName="italic" />
        <ComboBox label="Font size" value="16 pt" className="w-[71px]" inputClassName="" />
        <ToolItems items={formatBar} />
      </div>

      <div className="flex min-h-0 flex-1">
        <main className="flex min-w-0 flex-1 flex-col">
          <div className="flex h-[29px] shrink-0 items-center pr-[5px] pb-[3px] pl-[3px]">
            <ComboBox label="Name box" value="A1:K1" className="w-[107px]" inputClassName="" />
            <div className="ml-1.5 flex items-center">
              <button type="button" aria-label="Function wizard">{icons.fx}</button>
              <button type="button" aria-label="Select function" className="flex items-center">{icons.sigma}<Caret /></button>
              <button type="button" aria-label="Formula">{icons.equals}</button>
            </div>
            <input
              aria-label="Formula input"
              defaultValue="Auswertung & Dashboard – Feedback 2026"
              className="h-[17px] min-w-0 flex-1 border border-[#d3d1cf] bg-white pl-1 text-[9px] text-[#3c3c3c] outline-none"
            />
            <button type="button" aria-label="Expand formula bar" className="ml-0.5">
              <svg viewBox="0 0 8 8" className="size-2" fill="#2e2e2e" aria-hidden="true"><path d="M0 2h8L4 6z" /></svg>
            </button>
          </div>

          <div className="flex min-h-0 flex-1">
            <div className="relative min-w-0 flex-1 overflow-hidden bg-white">
              <SheetTable />
              <RatingChart />
              <RecommendationChart />
              <FeedbackTypeChart />
              <MonthChart />
            </div>
            <div className="flex w-[10px] shrink-0 flex-col items-center bg-[#cdcdcd] pt-[5px]">
              <div className="h-[48%] w-[5px] rounded-full bg-[#7f8281]" />
            </div>
          </div>

          <div className="mr-[10px] flex h-[10px] shrink-0 items-center justify-between bg-[#cdcdcd] pr-px pl-0.5">
            <div className="h-1.5 w-[47%] rounded-full bg-[#7f8281]" />
            <div className="h-1.5 w-0.5 bg-[#4d4d4d]" />
          </div>
          <SheetTabs />
        </main>

        <aside aria-label="Sidebar" className="relative flex w-[38px] shrink-0 flex-col items-center gap-[13px] border-l border-[#d3d1cf] pt-[7px]">
          {["menu", "properties", "styles", "gallery", "navigator", "fx"].map((name) => (
            <button key={name} type="button" aria-label={name}>{icons[name]}</button>
          ))}
          <button type="button" aria-label="Hide sidebar" className="absolute top-[268px] -left-px flex h-[50px] w-[5px] items-center justify-center bg-[#979a99]">
            <svg viewBox="0 0 4 6" className="h-1.5 w-1" fill="#fff" aria-hidden="true"><path d="M0 0l4 3-4 3z" /></svg>
          </button>
        </aside>
      </div>

      <StatusBar />
    </div>
  );
}
